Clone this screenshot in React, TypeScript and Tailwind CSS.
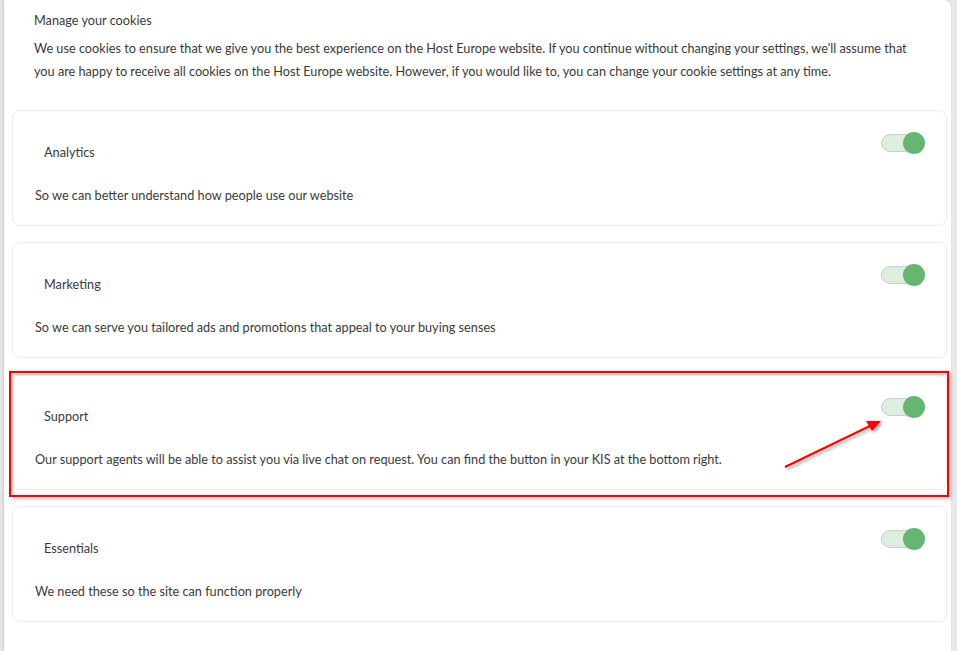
const cards = [
  { title: "Analytics", text: "So we can better understand how people use our website" },
  { title: "Marketing", text: "So we can serve you tailored ads and promotions that appeal to your buying senses" },
  {
    title: "Support",
    text: "Our support agents will be able to assist you via live chat on request. You can find the button in your KIS at the bottom right.",
    marked: true,
  },
  { title: "Essentials", text: "We need these so the site can function properly" },
];

function Toggle() {
  return (
    <div className="relative h-[20px] w-[44px] shrink-0">
      <div className="absolute left-0 top-[1px] h-[18px] w-[42px] rounded-full border border-[#c9cfc9] bg-[#dcefdf]" />
      <div className="absolute right-0 top-[-1px] h-[22px] w-[22px] rounded-full bg-[#66b672]" />
    </div>
  );
}

function CookieCard({ title, text, marked }: { title: string; text: string; marked?: boolean }) {
  return (
    <div className="relative">
      <div className="h-[116px] rounded-lg border border-[#ececec] bg-white pl-[22px] pr-[21px]">
        <div className="flex items-start justify-between pt-[22px]">
          <p className="pl-[9px] pt-[10px] text-[12.7px] text-[#3a3a3a]">{title}</p>
          <Toggle />
        </div>
        <p className="mt-[24px] text-[12.7px] text-[#3a3a3a]">{text}</p>
      </div>
      {marked && (
        <div className="pointer-events-none absolute -left-[3px] -right-[2px] -top-[3px] -bottom-[7px] border-2 border-[#ff0000] shadow-[inset_2px_2px_3px_rgba(0,0,0,0.25),2px_2px_3px_rgba(0,0,0,0.25)]" />
      )}
    </div>
  );
}

export default function App() {
  return (
    <div
      className="relative h-[651px] w-[957px] overflow-hidden bg-[#e8e8e8] pl-[4px] pr-[6px]"
      style={{ fontFamily: "Lato, 'Noto Sans', sans-serif" }}
    >
      <div className="h-full rounded-tr-lg bg-white pl-[8px] pr-[4px] shadow-[-1px_0_3px_rgba(0,0,0,0.15)]">
        <div className="pl-[22px] pr-[20px] pt-[11px]">
          <h2 className="text-[12.7px] leading-[18px] text-[#3a3a3a]">Manage your cookies</h2>
          <p className="mt-[8px] text-[12.7px] leading-[23px] text-[#3a3a3a]">
            We use cookies to ensure that we give you the best experience on the Host Europe website. If you continue
            without changing your settings, we'll assume that you are happy to receive all cookies on the Host Europe
            website. However, if you would like to, you can change your cookie settings at any time.
          </p>
        </div>
        <div className="mt-[27px] flex flex-col gap-[16px]">
          {cards.map((c) => (
            <CookieCard key={c.title} {...c} />
          ))}
        </div>
      </div>
      <svg className="pointer-events-none absolute left-0 top-0" width="957" height="651">
        <defs>
          <filter id="sh" x="-20%" y="-20%" width="140%" height="140%">
            <feDropShadow dx="2" dy="2" stdDeviation="1.5" floodColor="#000" floodOpacity="0.35" />
          </filter>
        </defs>
        <g filter="url(#sh)">
          <line x1="785" y1="467" x2="872" y2="425" stroke="#ff0000" strokeWidth="2" />
          <polygon points="881,421 866,421 872,431" fill="#ff0000" />
        </g>
      </svg>
    </div>
  );
}
